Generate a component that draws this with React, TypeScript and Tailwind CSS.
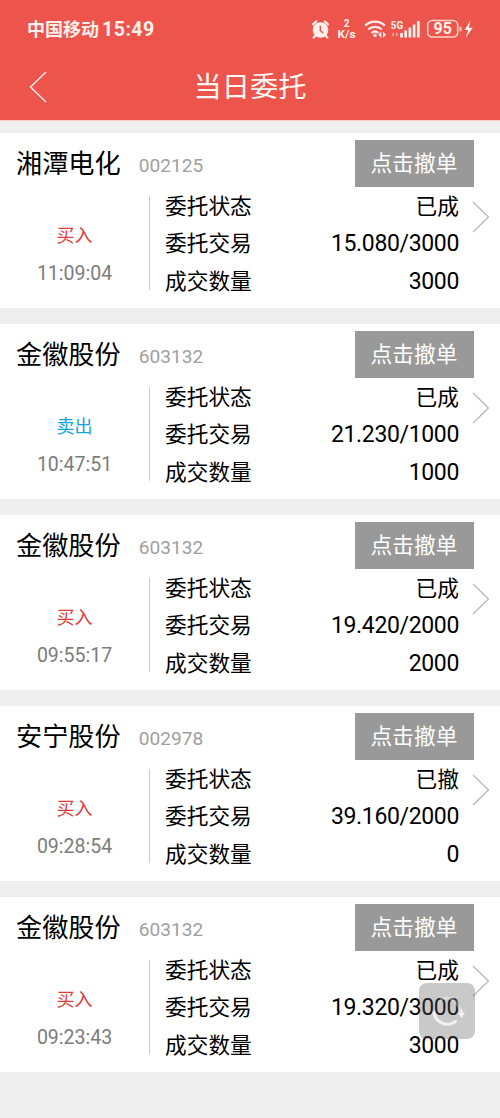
type Order = {
  name: string;
  code: string;
  side: 'buy' | 'sell';
  time: string;
  status: string;
  trade: string;
  filled: string;
};

const orders: Order[] = [
  { name: '湘潭电化', code: '002125', side: 'buy', time: '11:09:04', status: '已成', trade: '15.080/3000', filled: '3000' },
  { name: '金徽股份', code: '603132', side: 'sell', time: '10:47:51', status: '已成', trade: '21.230/1000', filled: '1000' },
  { name: '金徽股份', code: '603132', side: 'buy', time: '09:55:17', status: '已成', trade: '19.420/2000', filled: '2000' },
  { name: '安宁股份', code: '002978', side: 'buy', time: '09:28:54', status: '已撤', trade: '39.160/2000', filled: '0' },
  { name: '金徽股份', code: '603132', side: 'buy', time: '09:23:43', status: '已成', trade: '19.320/3000', filled: '3000' },
];

const StatusIcons = () => (
  <svg width="164" height="24" viewBox="311 18 164 24" fill="none" stroke="#fff0ec" className="font-['Roboto','Noto_Sans_CJK_SC',sans-serif]">
    {/* Alarm clock */}
    <circle cx="320.5" cy="30" r="7.8" fill="#fff0ec" stroke="none" />
    <path d="M313 24.3l3.2-2.8M328 24.3l-3.2-2.8M315 36l-1.4 1.6M326 36l1.4 1.6" strokeWidth="2.2" strokeLinecap="round" />
    <path d="M320.3 25.8v4.6l3 2.8" stroke="#ed544b" strokeWidth="1.4" />
    {/* Network speed */}
    <g fill="#fff0ec" stroke="none" fontWeight="700" textAnchor="middle">
      <text x="346.5" y="27" fontSize="10">2</text>
      <text x="346.5" y="38.2" fontSize="10" textLength="18" lengthAdjust="spacingAndGlyphs">K/s</text>
      <text x="397" y="28.5" fontSize="11" textLength="12.5" lengthAdjust="spacingAndGlyphs">5G</text>
    </g>
    {/* Wifi */}
    <path d="M365.2 25.6a14 14 0 0 1 19.6 0M368.2 29.5a10 10 0 0 1 13.6 0M371.4 33a5.4 5.4 0 0 1 7 0" strokeWidth="2.2" />
    <circle cx="375" cy="35.4" r="1.7" fill="#fff0ec" stroke="none" />
    <path d="M381.3 31.5l-3 3.2 3 3.2zM383 31.5l3 3.2-3 3.2z" fill="#fff0ec" stroke="none" />
    {/* Signal */}
    <path d="M394 32l-2.5 2.5 2.5 2.5zM395.8 32l2.5 2.5-2.5 2.5z" fill="#fff0ec" stroke="none" opacity="0.5" />
    <path d="M401.5 37.5V33M405.7 37.5V30.5M409.9 37.5V27.5M414.1 37.5V24.5M418.3 37.5V21" strokeWidth="2.7" />
    {/* Battery */}
    <rect x="427.7" y="20.5" width="30" height="16.5" rx="4.5" strokeWidth="1.6" opacity="0.8" />
    <path d="M460.5 26.8v4.4" strokeWidth="2" opacity="0.8" />
    <text x="442.8" y="34.4" fontSize="16" fontWeight="700" textAnchor="middle" fill="#fff0ec" stroke="none">95</text>
    <path d="M470.5 20.5l-6 9.5h3.6l-2.4 8 7-10.3h-3.8z" fill="#fff0ec" stroke="none" />
  </svg>
);

const Header = () => (
  <header className="h-[121px] bg-[#ed544b] border-b border-[#fbcbc2]">
    <div className="h-[54px] pt-[5px] pl-[27px] pr-[25px] flex items-center justify-between text-[#fff0ec]">
      <div className="flex items-center gap-[3px] font-bold leading-6">
        <span className="text-[18px]">中国移动</span>
        <span className="text-[19.5px] tracking-[0.5px]">15:49</span>
      </div>
      <StatusIcons />
    </div>
    <div className="h-[66px] flex items-center">
      <svg width="20" height="32" viewBox="0 0 20 32" fill="none" stroke="#fff0ec" strokeWidth="1.4" className="ml-7">
        <path d="M18 1L2.5 16L18 31" />
      </svg>
      <h1 className="flex-1 pt-px pr-12 text-center text-[28.2px] leading-10 text-[#fff7f4]">当日委托</h1>
    </div>
  </header>
);

const Row = ({ label, value, numeric }: { label: string; value: string; numeric?: boolean }) => (
  <div className="h-[37.5px] flex items-center justify-between text-[21.7px] leading-[30px]">
    <span>{label}</span>
    <span className={numeric ? 'text-[23px] tracking-[-0.35px]' : ''}>{value}</span>
  </div>
);

const OrderCard = ({ order }: { order: Order }) => (
  <section className="h-[175px] bg-white text-black">
    <div className="h-[54px] pt-[7px] pl-4 pr-[26px] flex items-center">
      <h2 className="text-[26.2px] leading-9">{order.name}</h2>
      <span className="ml-[18px] pt-[5px] text-[19.1px] leading-6 text-[#a0a0a0]">{order.code}</span>
      <button className="ml-auto h-[47px] w-[119px] pr-px bg-[#999] text-[21.7px] leading-[30px] text-white">点击撤单</button>
    </div>
    <div className="flex">
      <div className="w-[149px] pt-[37px] text-center">
        <p className={order.side === 'buy' ? 'text-[18px] leading-6 text-[#e23c39]' : 'text-[18px] leading-6 text-[#12a5dc]'}>
          {order.side === 'buy' ? '买入' : '卖出'}
        </p>
        <p className="mt-[14px] text-[19.5px] leading-6 text-[#7c7c7c]">{order.time}</p>
      </div>
      <div className="mt-[9px] h-[94px] w-px bg-[#ccc]" />
      <div className="ml-[15px] pt-[1.2px] w-[294px]">
        <Row label="委托状态" value={order.status} />
        <Row label="委托交易" value={order.trade} numeric />
        <Row label="成交数量" value={order.filled} numeric />
      </div>
      <svg width="18" height="32" viewBox="0 0 18 32" fill="none" stroke="#b5b5b5" strokeWidth="1.2" className="mt-[14px] ml-[13px]">
        <path d="M1 1L16.5 16L1 31" />
      </svg>
    </div>
  </section>
);

export default function App() {
  return (
    <div className="relative w-[500px] h-[1118px] overflow-hidden bg-[#efefef] font-['Roboto','Noto_Sans_CJK_SC',sans-serif]">
      <Header />
      <main className="pt-3 flex flex-col gap-4">
        {orders.map((order) => (
          <OrderCard key={order.time} order={order} />
        ))}
      </main>
      {/* Floating refresh button */}
      <div className="absolute left-[419px] top-[983px] size-14 rounded-lg bg-[#5a5a5a]/33">
        <svg width="56" height="56" viewBox="0 0 56 56" fill="none" stroke="#fff" strokeWidth="3" strokeLinecap="round">
          <path d="M22 16.5A14 14 0 0 1 34 16.5" opacity="0.35" />
          <path d="M15 29.5A13.5 13.5 0 0 0 36.5 38.5" opacity="0.75" />
          <path d="M36 18.5Q40 22 41 27" opacity="0.3" />
          <path d="M42.5 25l1.500 4 2 2-2 1.500-1.500 3-1.500-3-2-1.500 2-2z" fill="#fff" stroke="none" opacity="0.75" />
        </svg>
      </div>
    </div>
  );
}
